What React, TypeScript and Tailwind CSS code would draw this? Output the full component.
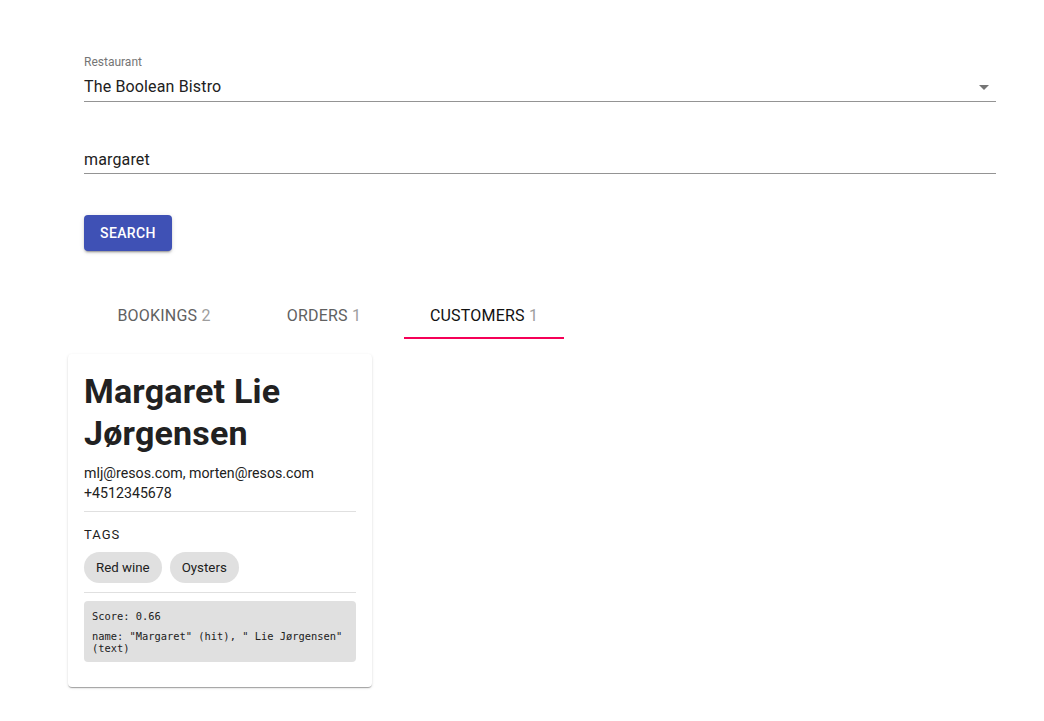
import { useState } from "react";

const tabs = [
  { label: "BOOKINGS", count: 2 },
  { label: "ORDERS", count: 1 },
  { label: "CUSTOMERS", count: 1 },
];

const tags = ["Red wine", "Oysters"];

const App = () => {
  const [query, setQuery] = useState("margaret");
  const [activeTab, setActiveTab] = useState(2);

  return (
    <div className="min-h-screen bg-white font-['Roboto',sans-serif] text-[#212121]">
      <div className="px-[84px] pt-[48px] w-[1080px]">
        {/* restaurant select */}
        <div className="w-[912px]">
          <div className="text-[12px] leading-[14px] text-[#757575] pt-[7px]">Restaurant</div>
          <div className="flex items-center justify-between border-b border-[#949494] h-[32px] mt-[1px] pt-[2px]">
            <span className="text-[16px] leading-[24px] tracking-[0.15px] text-[#212121]">The Boolean Bistro</span>
            <svg width="24" height="24" viewBox="0 0 24 24">
              <path d="M7 10l5 5 5-5z" fill="#757575" />
            </svg>
          </div>
        </div>

        {/* search input */}
        <div className="w-[912px] mt-[42px] border-b border-[#949494]">
          <input
            className="w-full text-[16px] leading-[24px] h-[29px] pt-[2px] outline-none bg-transparent text-[#212121] tracking-[0.15px] font-['Roboto',sans-serif]"
            value={query}
            onChange={(e) => setQuery(e.target.value)}
          />
        </div>

        <button className="mt-[41px] h-[36px] px-[16px] rounded-[4px] bg-[#3f51b5] text-white text-[14px] font-medium tracking-[0.4px] shadow-[0_3px_1px_-2px_rgba(0,0,0,0.2),0_2px_2px_0_rgba(0,0,0,0.14),0_1px_5px_0_rgba(0,0,0,0.12)]">
          SEARCH
        </button>

        {/* tabs */}
        <div className="flex mt-[40px]">
          {tabs.map((tab, i) => (
            <button
              key={tab.label}
              onClick={() => setActiveTab(i)}
              className={`relative w-[160px] h-[48px] pt-[2px] text-[16px] tracking-[0.2px] ${
                activeTab === i ? "text-[#111111]" : "text-[#616161]"
              }`}
            >
              {tab.label} <span className="text-[#9e9e9e]">{tab.count}</span>
              {activeTab === i && <span className="absolute left-0 right-0 bottom-0 h-[2px] bg-[#f50057]" />}
            </button>
          ))}
        </div>
      </div>

      {/* customer card */}
      <div className="ml-[68px] mt-[15px] w-[304px] bg-white rounded-[4px] px-[16px] pt-[16px] pb-[25px] shadow-[0_2px_1px_-1px_rgba(0,0,0,0.2),0_1px_1px_0_rgba(0,0,0,0.14),0_1px_3px_0_rgba(0,0,0,0.12)]">
        <h2 className="text-[34px] leading-[42px] font-bold text-[#212121] tracking-[0.2px]">Margaret Lie Jørgensen</h2>
        <div className="mt-[9px] text-[14.2px] leading-[20px]">
          <div>mlj@resos.com, morten@resos.com</div>
          <div>+4512345678</div>
        </div>
        <div className="border-t border-[#e0e0e0] mt-[8px]" />
        <div className="mt-[15px] text-[13px] leading-[16px] tracking-[1px] text-[#212121]">TAGS</div>
        <div className="flex gap-[8px] mt-[9px]">
          {tags.map((tag) => (
            <span
              key={tag}
              className="h-[31px] px-[12px] rounded-full bg-[#e0e0e0] text-[13.3px] leading-[31px] text-[#212121]"
            >
              {tag}
            </span>
          ))}
        </div>
        <div className="border-t border-[#e0e0e0] mt-[9px]" />
        <div className="mt-[8px] bg-[#e0e0e0] rounded-[4px] pl-[8px] pr-[4px] pt-[8px] pb-[8px] font-['DejaVu_Sans_Mono',monospace] text-[10.4px] text-[#212121]">
          <div className="leading-[14px]">Score: 0.66</div>
          <div className="leading-[12px] mt-[7px]">name: "Margaret" (hit), " Lie Jørgensen" (text)</div>
        </div>
      </div>
    </div>
  );
};

export default App;
